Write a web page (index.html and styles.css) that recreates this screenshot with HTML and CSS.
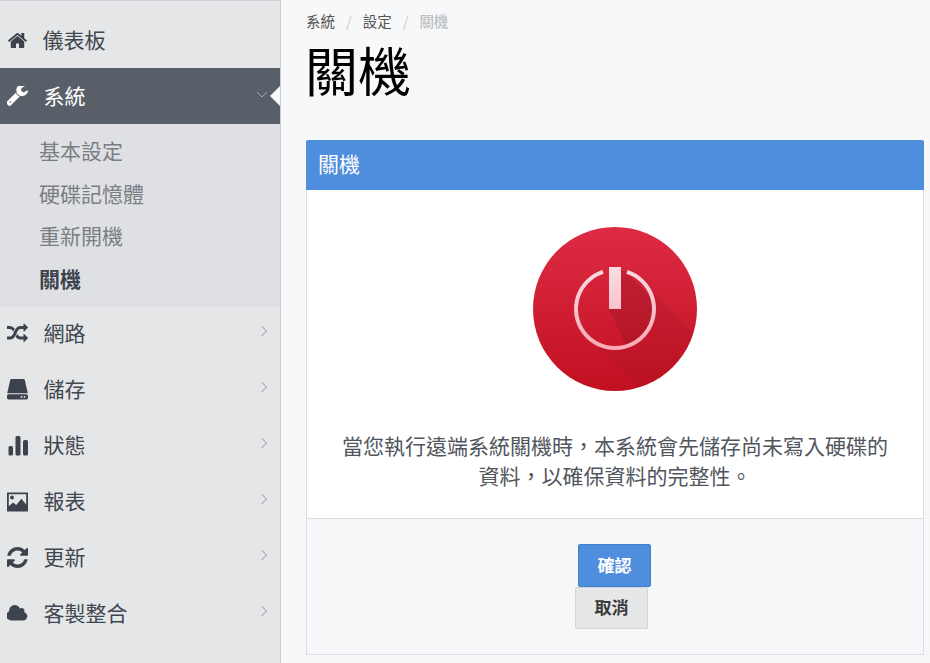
FILE: index.html
```html
<!DOCTYPE html>
<html lang="zh-Hant">
<head>
<meta charset="utf-8">
<title>關機</title>
<link rel="stylesheet" href="styles.css">
</head>
<body>
<aside class="sidebar">
  <nav class="nav">
    <a class="item">
      <svg class="icon" viewBox="0 0 1792 1792"><path d="M1472 992v480q0 26-19 45t-45 19h-384v-384h-256v384h-384q-26 0-45-19t-19-45v-480q0-1 .5-3t.5-3l575-474 575 474q1 2 1 6zm223-69l-62 74q-8 9-21 11h-3q-13 0-21-7l-692-577-692 577q-12 8-24 7-13-2-21-11l-62-74q-8-10-7-23.5t11-21.5l719-599q32-26 76-26t76 26l244 204v-195q0-14 9-23t23-9h192q14 0 23 9t9 23v408l219 182q10 8 11 21.5t-7 23.5z"/></svg>
      <span class="label label-first">儀表板</span>
    </a>
    <a class="item active">
      <svg class="icon" viewBox="128 252 1600 1600"><path d="M448 1472q0-26-19-45t-45-19-45 19-19 45 19 45 45 19 45-19 19-45zm644-420l-682 682q-37 37-90 37-52 0-91-37l-106-108q-38-36-38-90 0-53 38-91l681-681q39 98 114.5 173.5t173.5 114.5zm634-435q0 39-23 106-47 134-164.5 217.5t-258.5 83.5q-185 0-316.5-131.5t-131.5-316.5 131.5-316.5 316.5-131.5q58 0 121.5 16.5t107.5 46.5q16 11 16 28t-16 28l-293 169v224l193 107q5-3 79-48.5t135.5-81 70.5-35.5q15 0 23.5 10t8.5 25z"/></svg>
      <span class="label">系統</span>
      <svg class="chev chev-down" viewBox="0 0 12 8"><path d="M1 1l5 5 5-5"/></svg>
    </a>
    <div class="sub">
      <a class="sub-item">基本設定</a>
      <a class="sub-item">硬碟記憶體</a>
      <a class="sub-item">重新開機</a>
      <a class="sub-item current">關機</a>
    </div>
    <a class="item item-low">
      <svg class="icon" viewBox="0 128 1792 1536"><path d="M666 481q-60 92-137 273-22-45-37-72.5t-40.5-63.5-51-56.5-63-35-81.5-14.5h-224q-14 0-23-9t-9-23v-192q0-14 9-23t23-9h224q250 0 410 225zm1126 799q0 14-9 23l-320 320q-9 9-23 9-13 0-22.5-9.5t-9.5-22.5v-192q-32 0-85 .5t-81 1-73-1-71-5-64-10.5-63-18.5-58-28.5-59-40-55-53.5-56-69.5q59-93 136-273 22 45 37 72.5t40.5 63.5 51 56.5 63 35 81.5 14.5h256v-192q0-14 9-23t23-9q12 0 24 10l319 319q9 9 9 23zm0-896q0 14-9 23l-320 320q-9 9-23 9-13 0-22.5-9.5t-9.5-22.5v-192h-256q-48 0-87 15t-69 45-51 61.5-45 77.5q-32 62-78 171-29 66-49.5 111t-54 105-64 100-74 83-90 68.5-106.5 42-128 16.5h-224q-14 0-23-9t-9-23v-192q0-14 9-23t23-9h224q48 0 87-15t69-45 51-61.5 45-77.5q32-62 78-171 29-66 49.5-111t54-105 64-100 74-83 90-68.5 106.5-42 128-16.5h256v-192q0-14 9-23t23-9q12 0 24 10l319 319q9 9 9 23z"/></svg>
      <span class="label">網路</span>
      <svg class="chev" viewBox="0 0 8 12"><path d="M1.500 1l5 5-5 5"/></svg>
    </a>
    <a class="item item-low">
      <svg class="icon" viewBox="0 -1 21 21"><path d="M3.200 0c.2-.6.700-1 1.300-1h12c.6 0 1.100.4 1.300 1L20.800 13.300H.2z"/><path fill-rule="evenodd" d="M1.800 14.200h17.400c1 0 1.800.8 1.800 1.800v1.800c0 1-.8 1.800-1.800 1.800H1.800C.8 19.600 0 18.800 0 17.800V16c0-1 .8-1.800 1.800-1.800zM14.500 16a.9.9 0 1 0 0 1.800.9.900 0 0 0 0-1.800zm3 0a.9.9 0 1 0 0 1.800.9.900 0 0 0 0-1.800z"/></svg>
      <span class="label">儲存</span>
      <svg class="chev" viewBox="0 0 8 12"><path d="M1.500 1l5 5-5 5"/></svg>
    </a>
    <a class="item item-low">
      <svg class="icon" viewBox="0 0 21 21"><rect x="1.500" y="11" width="4.500" height="9.500" rx="1.500"/><rect x="8.500" y="1" width="5" height="19.500" rx="1.500"/><rect x="16" y="5" width="5" height="15.500" rx="1.500"/></svg>
      <span class="label">狀態</span>
      <svg class="chev" viewBox="0 0 8 12"><path d="M1.500 1l5 5-5 5"/></svg>
    </a>
    <a class="item item-low">
      <svg class="icon" viewBox="0 0 21 21"><path fill-rule="evenodd" d="M0 1.500h21v19H0zM1.800 3.300v11.900l4.400-3.800 3 2.500 5.200-6.200 4.800 5.800V3.300z"/><circle cx="5" cy="6.500" r="1.900"/></svg>
      <span class="label">報表</span>
      <svg class="chev" viewBox="0 0 8 12"><path d="M1.500 1l5 5-5 5"/></svg>
    </a>
    <a class="item item-low">
      <svg class="icon" viewBox="128 128 1536 1536"><path d="M1639 1056q0 5-1 7-64 268-268 434.5t-478 166.5q-146 0-282.5-55t-243.5-157l-129 129q-19 19-45 19t-45-19-19-45v-448q0-26 19-45t45-19h448q26 0 45 19t19 45-19 45l-137 137q71 66 161 102t187 36q134 0 250-65t186-179q11-17 53-117 8-23 30-23h192q13 0 22.5 9.500t9.500 22.500zm25-800v448q0 26-19 45t-45 19h-448q-26 0-45-19t-19-45 19-45l138-138q-148-137-349-137-134 0-250 65t-186 179q-11 17-53 117-8 23-30 23h-199q-13 0-22.500-9.500t-9.500-22.500v-7q65-268 270-434.500t480-166.500q146 0 284 55.500t245 156.500l130-129q19-19 45-19t45 19 19 45z"/></svg>
      <span class="label">更新</span>
      <svg class="chev" viewBox="0 0 8 12"><path d="M1.500 1l5 5-5 5"/></svg>
    </a>
    <a class="item item-low">
      <svg class="icon" viewBox="0 0 1920 1792"><path d="M1856 1152q0 159-112.500 271.500t-271.500 112.500h-1088q-185 0-316.500-131.500t-131.500-316.500q0-132 71-241.500t187-163.500q-2-28-2-43 0-212 150-362t362-150q158 0 286.500 88t187.500 230q70-62 166-62 106 0 181 75t75 181q0 75-41 138 129 30 213 134.500t84 239.500z"/></svg>
      <span class="label">客製整合</span>
      <svg class="chev" viewBox="0 0 8 12"><path d="M1.500 1l5 5-5 5"/></svg>
    </a>
  </nav>
</aside>
<main class="main">
  <ol class="crumbs">
    <li>系統</li>
    <li class="sep">/</li>
    <li>設定</li>
    <li class="sep">/</li>
    <li class="crumb-last">關機</li>
  </ol>
  <h1 class="title">關機</h1>
  <section class="panel">
    <h2 class="panel-head">關機</h2>
    <div class="panel-body">
      <svg class="power" viewBox="0 0 164 164">
        <defs>
          <linearGradient id="disc" gradientUnits="userSpaceOnUse" x1="0" y1="0" x2="0" y2="164">
            <stop offset="0" stop-color="#de2b44"/>
            <stop offset="1" stop-color="#c11121"/>
          </linearGradient>
          <linearGradient id="ring" gradientUnits="userSpaceOnUse" x1="0" y1="40" x2="0" y2="124">
            <stop offset="0" stop-color="#f9dde2"/>
            <stop offset="1" stop-color="#f9a8b3"/>
          </linearGradient>
          <clipPath id="discClip"><circle cx="82" cy="82" r="82"/></clipPath>
          <clipPath id="ringClip"><circle cx="82" cy="82" r="39"/></clipPath>
        </defs>
        <circle cx="82" cy="82" r="82" fill="url(#disc)"/>
        <g clip-path="url(#discClip)">
          <path d="M109.600 54.400L200 145 145 200 54.400 109.600z" fill="#000" opacity=".04"/>
        </g>
        <circle cx="82" cy="82" r="39" fill="url(#disc)"/>
        <g clip-path="url(#ringClip)">
          <path d="M88 40l100 100-58 58L76 82z" fill="#000" opacity=".1"/>
        </g>
        <path d="M70 44.900a39 39 0 1 0 24 0" fill="none" stroke="url(#ring)" stroke-width="4"/>
        <rect x="76" y="40" width="12" height="42" fill="url(#ring)"/>
      </svg>
      <p class="message">當您執行遠端系統關機時，本系統會先儲存尚未寫入硬碟的<br>資料，以確保資料的完整性。</p>
    </div>
    <div class="panel-foot">
      <button class="btn btn-primary" type="button">確認</button>
      <button class="btn btn-default" type="button">取消</button>
    </div>
  </section>
</main>
</body>
</html>
```
FILE: styles.css
```css
* { box-sizing: border-box; }
html, body { margin: 0; height: 100%; }
body {
  display: flex;
  height: 663px;
  overflow: hidden;
  background: #f7f8fa;
  font-family: "Noto Sans CJK TC", "Liberation Sans", sans-serif;
  color: #3d434c;
}
.sidebar {
  width: 281px;
  flex: none;
  background: #e5e6e8;
  border-right: 1px solid #cfd1d4;
  border-top: 1px solid #cfd1d4;
}
.nav { display: flex; flex-direction: column; padding-top: 11px; }
.item {
  position: relative;
  display: flex;
  align-items: center;
  height: 56px;
  padding-left: 7px;
  font-size: 21px;
  color: #41474f;
}
.item-low { padding-bottom: 4px; }
.icon { width: 21px; height: 21px; flex: none; fill: #3d434c; margin-right: 15.500px; }
.label { line-height: 1; margin-bottom: 2px; }
.label-first { margin-left: -1px; }
.chev {
  position: absolute;
  right: 12px;
  top: 18px;
  width: 8px;
  height: 12px;
  fill: none;
  stroke: #8f9296;
  stroke-width: 1;
}
.active { background: #595f69; color: #fff; }
.active .icon { fill: #fff; }
.active::after {
  content: "";
  position: absolute;
  right: 0;
  top: 18px;
  border-style: solid;
  border-width: 10px 10px 10px 0;
  border-color: transparent #f7f8fa transparent transparent;
}
.chev-down {
  right: 12px;
  top: 23px;
  width: 12px;
  height: 8px;
  stroke: #a3a7ad;
}
.sub {
  display: flex;
  flex-direction: column;
  height: 183px;
  padding: 5px 0 0 39px;
  background: #dfe0e3;
}
.sub-item {
  height: 42.500px;
  line-height: 42px;
  font-size: 21px;
  color: #7a7e84;
}
.current { color: #3d434c; font-weight: 700; }
.main {
  flex: 1;
  min-width: 0;
  padding: 0 6px 0 25px;
}
.crumbs {
  display: flex;
  gap: 11px;
  margin: 0;
  padding: 10px 0 0;
  list-style: none;
  font-size: 14.500px;
  line-height: 21px;
  color: #555;
}
.sep { color: #ccc; }
.crumb-last { color: #b5b7ba; }
.title {
  margin: 0 0 0 -1px;
  height: 109px;
  padding-top: 2px;
  font-size: 53px;
  line-height: 72px;
  font-weight: 400;
  color: #000;
}
.panel { display: flex; flex-direction: column; }
.panel-head {
  margin: 0;
  height: 50px;
  padding-left: 12px;
  background: #4f8ddd;
  color: #fff;
  font-size: 21px;
  font-weight: 400;
  line-height: 46px;
  border-radius: 2px 2px 0 0;
}
.panel-body {
  display: flex;
  flex-direction: column;
  align-items: center;
  height: 328px;
  padding-top: 37px;
  background: #fff;
  border-left: 1px solid #dcdde0;
  border-right: 1px solid #dcdde0;
}
.power { width: 164px; height: 164px; display: block; }
.message {
  margin: 39px 0 0;
  font-size: 21px;
  line-height: 30px;
  text-align: center;
  color: #51565d;
}
.panel-foot {
  display: flex;
  flex-direction: column;
  align-items: center;
  height: 137px;
  padding-top: 25px;
  border: 1px solid #dcdde0;
  background: #f7f8fa;
}
.btn {
  width: 73px;
  height: 42.500px;
  padding: 0 0 2px;
  font-family: inherit;
  font-size: 17px;
  font-weight: 700;
  border-radius: 2px;
  border: 1px solid;
}
.btn-primary { background: #4f8ddd; border-color: #3f7fd0; color: #fff; margin-right: 1px; }
.btn-default { background: #e6e7e8; border-color: #d4d5d7; color: #3a3a3a; margin-right: 7px; }
```
